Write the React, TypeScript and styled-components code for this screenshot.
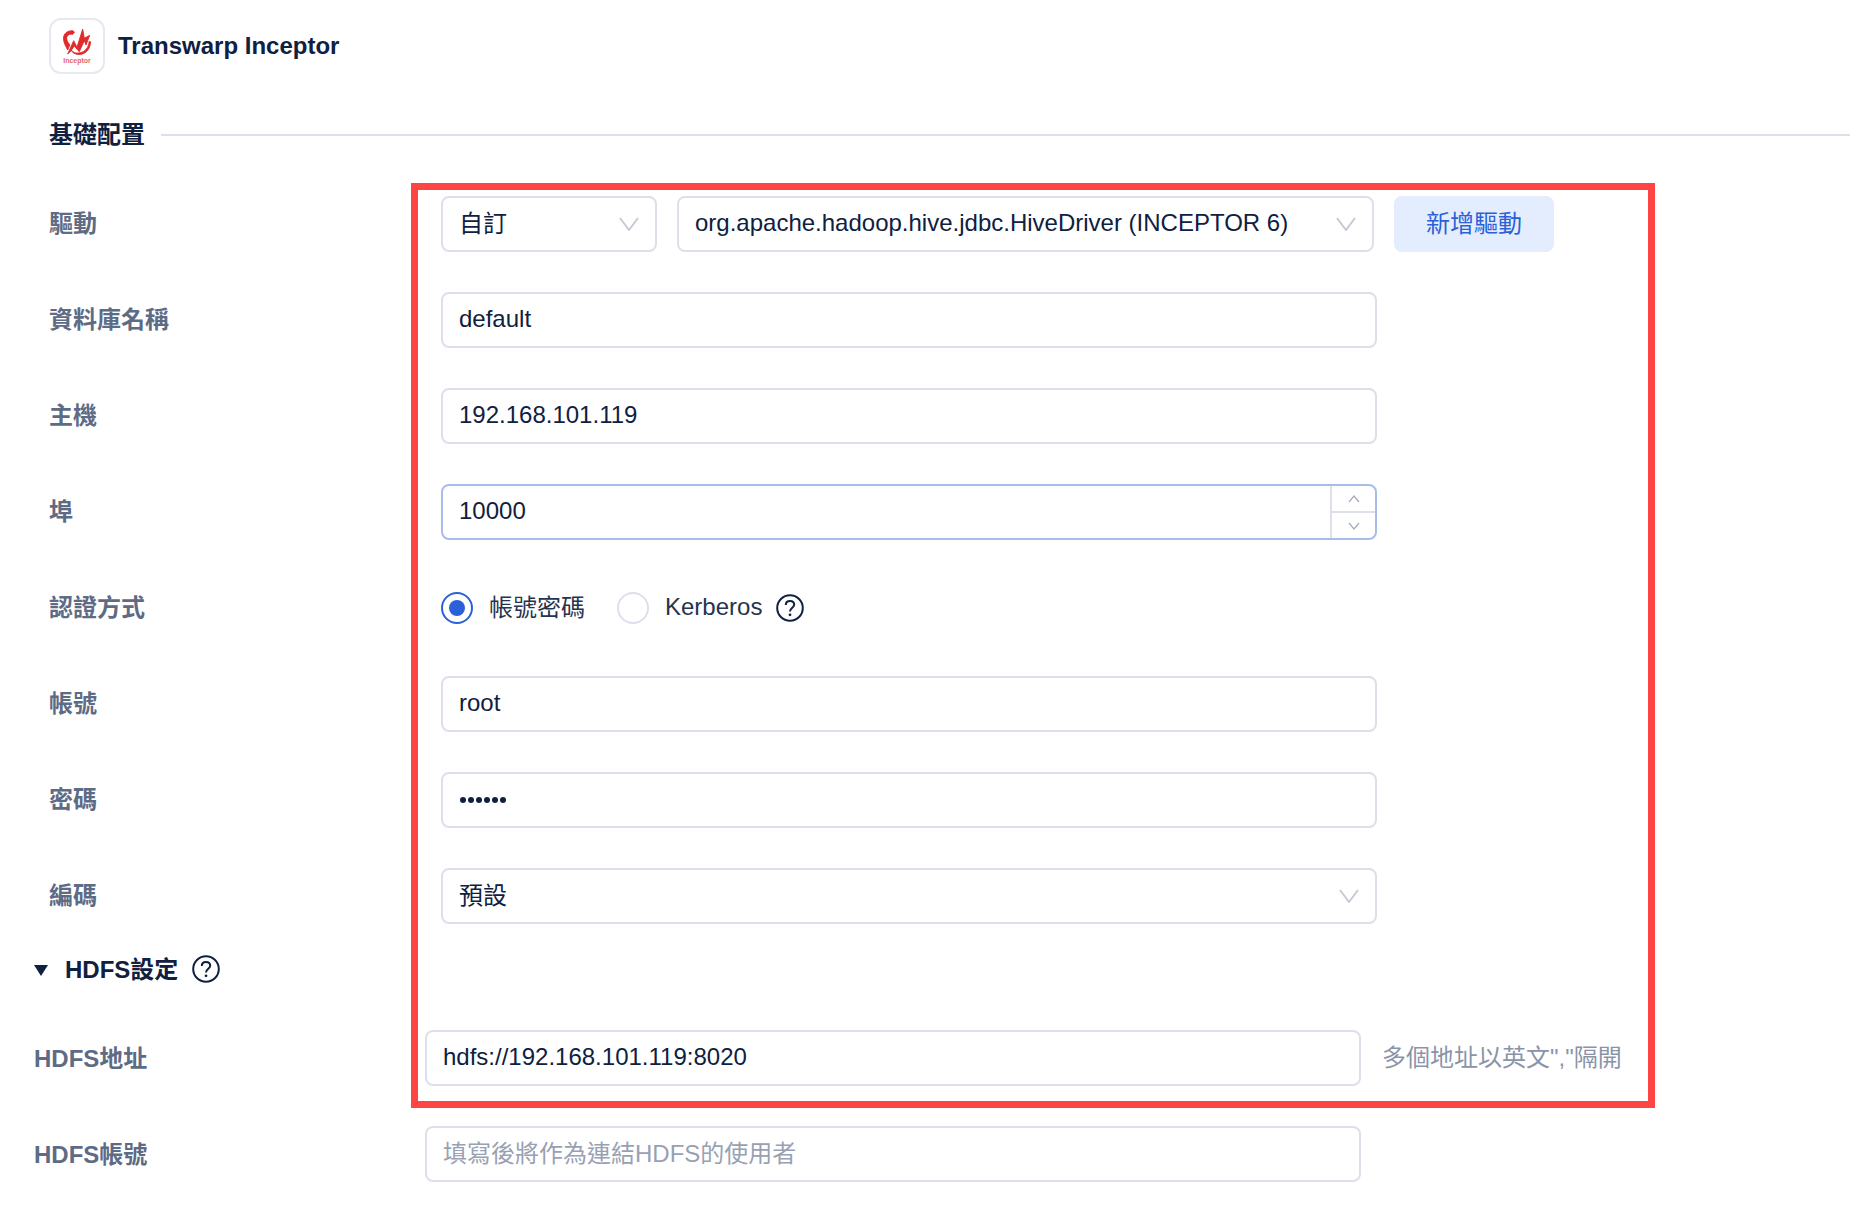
import React from 'react';
import styled, {createGlobalStyle} from 'styled-components';

const GlobalStyle = createGlobalStyle`
  html, body {
    margin: 0;
    padding: 0;
    background: #fff;
  }
  body {
    font-family: "Liberation Sans", "Noto Sans CJK TC", sans-serif;
    color: #0f2040;
  }
`;

const Chevron = () => (
    <ChevronSvg width="20" height="14" viewBox="0 0 20 14">
        <path d="M1 1 L10 13 L19 1" fill="none" stroke="#c5cad5" strokeWidth="2"/>
    </ChevronSvg>
);

const HelpIcon = () => (
    <svg width="28" height="28" viewBox="0 0 28 28">
        <circle cx="14" cy="14" r="12.8" fill="none" stroke="#0f2040" strokeWidth="2"/>
        <path d="M9.8 11 C9.8 8.4 11.8 7 14 7 C16.4 7 18.2 8.5 18.2 10.8 C18.2 13.6 14 14 14 17.4" fill="none" stroke="#0f2040" strokeWidth="2"/>
        <circle cx="14" cy="20.8" r="1.4" fill="#0f2040"/>
    </svg>
);

const App = () => {
    return (
        <Root>
            <GlobalStyle/>
            <Header>
                <LogoBox>
                    <svg width="28" height="27" viewBox="0 0 28 27">
                        <g fill="#e02a2c" stroke="#e02a2c" strokeWidth="0.9" strokeLinejoin="round">
                            <path d="M4.7 26 L10.7 12.7 L14 19.3 L19.7 1 L21.3 10.3 L26.7 7.3 L23 17 L21.3 12.7 L16.3 23.7 L11.3 18 L7.3 23.7 Z"/>
                            <path d="M9.7 2.7 C4 2.5 0.5 6 0.5 10.3 C0.5 15 3 18.5 4.7 22 L6.8 17 C5 14.5 3.7 12.5 3.7 10.3 C3.7 7.5 6.5 5.5 9.5 6.5 L11.5 4 Z"/>
                            <path d="M8 22 C11 25.2 14 25.4 17 24.8 C22 24 26 19 26 13.7 L27.5 13.7 C27.5 21 22.5 26.5 16.3 26.5 C12.5 26.5 9.5 25 8 22 Z"/>
                        </g>
                    </svg>
                    <LogoText>Inceptor</LogoText>
                </LogoBox>
                <Title>Transwarp Inceptor</Title>
            </Header>

            <Section>
                <SectionTitle>基礎配置</SectionTitle>
                <Divider/>
            </Section>

            <FormRow>
                <Label>驅動</Label>
                <Controls>
                    <Select width="216px">
                        <CjkValue>自訂</CjkValue>
                        <Chevron/>
                    </Select>
                    <Select width="697px">
                        <Value>org.apache.hadoop.hive.jdbc.HiveDriver (INCEPTOR 6)</Value>
                        <Chevron/>
                    </Select>
                    <AddButton>新增驅動</AddButton>
                </Controls>
            </FormRow>

            <FormRow>
                <Label>資料庫名稱</Label>
                <Field><Value>default</Value></Field>
            </FormRow>

            <FormRow>
                <Label>主機</Label>
                <Field><Value>192.168.101.119</Value></Field>
            </FormRow>

            <FormRow>
                <Label>埠</Label>
                <Field focused>
                    <Value>10000</Value>
                    <Stepper>
                        <StepButton>
                            <svg width="12" height="8" viewBox="0 0 12 8"><path d="M1 7 L6 1 L11 7" fill="none" stroke="#a5abb8" strokeWidth="1.2"/></svg>
                        </StepButton>
                        <StepButton bottom>
                            <svg width="12" height="8" viewBox="0 0 12 8"><path d="M1 1 L6 7 L11 1" fill="none" stroke="#a5abb8" strokeWidth="1.2"/></svg>
                        </StepButton>
                    </Stepper>
                </Field>
            </FormRow>

            <FormRow>
                <Label>認證方式</Label>
                <RadioGroup>
                    <Radio checked/>
                    <RadioText cjk>帳號密碼</RadioText>
                    <Radio second/>
                    <RadioText>Kerberos</RadioText>
                    <HelpIcon/>
                </RadioGroup>
            </FormRow>

            <FormRow>
                <Label>帳號</Label>
                <Field><Value>root</Value></Field>
            </FormRow>

            <FormRow>
                <Label>密碼</Label>
                <Field>
                    <Dots>
                        {Array.from({length: 6}).map((_, i) => <Dot key={i}/>)}
                    </Dots>
                </Field>
            </FormRow>

            <FormRow last>
                <Label>編碼</Label>
                <Field>
                    <CjkValue>預設</CjkValue>
                    <Chevron/>
                </Field>
            </FormRow>

            <Collapse>
                <Triangle/>
                <CollapseTitle>HDFS設定</CollapseTitle>
                <HelpIcon/>
            </Collapse>

            <HdfsRow>
                <Label>HDFS地址</Label>
                <HdfsField><Value>hdfs://192.168.101.119:8020</Value></HdfsField>
                <Hint>多個地址以英文","隔開</Hint>
            </HdfsRow>

            <HdfsRow>
                <Label>HDFS帳號</Label>
                <HdfsField><Placeholder>填寫後將作為連結HDFS的使用者</Placeholder></HdfsField>
            </HdfsRow>

            <Highlight/>
        </Root>
    );
};

export default App;

const Root = styled.div`
  position: relative;
  width: 1850px;
  height: 1218px;
  overflow: hidden;
  box-sizing: border-box;
  padding-top: 18px;
`;

const Header = styled.div`
  display: flex;
  align-items: center;
  gap: 13px;
  margin-left: 49px;
`;

const LogoBox = styled.div`
  box-sizing: border-box;
  width: 56px;
  height: 56px;
  border: 2px solid #e6e9f0;
  border-radius: 12px;
  display: flex;
  flex-direction: column;
  align-items: center;
  padding-top: 8px;
`;

const LogoText = styled.span`
  font-size: 7px;
  font-weight: 700;
  line-height: 7px;
  color: #e2686a;
  margin-top: 2px;
`;

const Title = styled.div`
  font-size: 24px;
  font-weight: 700;
  color: #0f2040;
`;

const Section = styled.div`
  display: flex;
  align-items: center;
  gap: 16px;
  height: 40px;
  margin: 41px 0 41px 49px;
`;

const SectionTitle = styled.div`
  font-size: 24px;
  font-weight: 700;
  color: #0f2040;
  padding-bottom: 6px;
`;

const Divider = styled.div`
  flex: 1;
  height: 2px;
  background: #dde0ea;
`;

const FormRow = styled.div<{last?: boolean}>`
  display: grid;
  grid-template-columns: 392px 1fr;
  align-items: center;
  height: 56px;
  margin-left: 49px;
  margin-bottom: ${props => props.last ? '25px' : '40px'};
`;

const Label = styled.div`
  font-size: 24px;
  font-weight: 700;
  color: #5d6b85;
  padding-bottom: 5px;
`;

const Controls = styled.div`
  display: flex;
  gap: 20px;
`;

const Select = styled.div<{width: string}>`
  box-sizing: border-box;
  width: ${props => props.width};
  height: 56px;
  border: 2px solid #dde0ea;
  border-radius: 8px;
  padding: 0 16px;
  display: flex;
  align-items: center;
  justify-content: space-between;
`;

const ChevronSvg = styled.svg`
  flex: none;
`;

const Value = styled.span`
  font-size: 24px;
  color: #0f2040;
  padding-bottom: 2px;
`;

const CjkValue = styled(Value)`
  padding-bottom: 6px;
`;

const AddButton = styled.div`
  width: 160px;
  height: 56px;
  box-sizing: border-box;
  padding-bottom: 6px;
  border-radius: 8px;
  background: #e4edfd;
  color: #2b60d8;
  font-size: 24px;
  display: flex;
  align-items: center;
  justify-content: center;
`;

const Field = styled.div<{focused?: boolean}>`
  position: relative;
  box-sizing: border-box;
  width: 936px;
  height: 56px;
  border: 2px solid ${props => props.focused ? '#a9bde8' : '#dde0ea'};
  border-radius: 8px;
  padding: 0 16px;
  display: flex;
  align-items: center;
  justify-content: space-between;
`;

const Stepper = styled.div`
  align-self: stretch;
  width: 43px;
  margin-right: -16px;
  border-left: 2px solid #dde0ea;
  display: flex;
  flex-direction: column;
`;

const StepButton = styled.div<{bottom?: boolean}>`
  flex: 1;
  display: flex;
  align-items: center;
  justify-content: center;
  border-top: ${props => props.bottom ? '2px solid #dde0ea' : 'none'};
`;

const RadioGroup = styled.div`
  display: flex;
  align-items: center;
  padding-bottom: 1px;
`;

const Radio = styled.div<{checked?: boolean; second?: boolean}>`
  box-sizing: border-box;
  width: 32px;
  height: 32px;
  border-radius: 50%;
  border: 2px solid ${props => props.checked ? '#2b60d8' : '#dde0ea'};
  margin-left: ${props => props.second ? '32px' : '0'};
  display: flex;
  align-items: center;
  justify-content: center;

  &::after {
    content: "";
    display: ${props => props.checked ? 'block' : 'none'};
    width: 16px;
    height: 16px;
    border-radius: 50%;
    background: #2b60d8;
  }
`;

const RadioText = styled.span<{cjk?: boolean}>`
  font-size: 24px;
  color: #26344f;
  margin-left: 16px;
  padding-bottom: ${props => props.cjk ? '4px' : '1px'};

  & + svg {
    margin-left: 14px;
  }
`;

const Dots = styled.div`
  display: flex;
  gap: 1.6px;
  margin-left: 1px;
`;

const Dot = styled.span`
  width: 6.4px;
  height: 6.4px;
  border-radius: 50%;
  background: #0f2040;
`;

const Collapse = styled.div`
  display: flex;
  align-items: center;
  height: 40px;
  margin-left: 34px;
  margin-bottom: 41px;
`;

const Triangle = styled.span`
  width: 0;
  height: 0;
  border-left: 7px solid transparent;
  border-right: 7px solid transparent;
  border-top: 11px solid #0f2040;
  margin: 2px 17px 0 0;
`;

const CollapseTitle = styled.span`
  font-size: 24px;
  font-weight: 700;
  color: #0f2040;
  margin-right: 14px;
  padding-bottom: 3px;
`;

const HdfsRow = styled.div`
  display: flex;
  align-items: center;
  height: 56px;
  margin-left: 34px;
  margin-bottom: 40px;

  & > ${Label} {
    width: 391px;
    padding-bottom: 4px;
  }
`;

const HdfsField = styled.div`
  box-sizing: border-box;
  width: 936px;
  height: 56px;
  border: 2px solid #dde0ea;
  border-radius: 8px;
  padding: 0 16px;
  display: flex;
  align-items: center;
`;

const Placeholder = styled.span`
  font-size: 24px;
  color: #98a1b2;
  padding-bottom: 5px;
`;

const Hint = styled.span`
  font-size: 24px;
  color: #8a94a8;
  margin-left: 21px;
  padding-bottom: 6px;
`;

const Highlight = styled.div`
  position: absolute;
  left: 411px;
  top: 183px;
  width: 1244px;
  height: 925px;
  box-sizing: border-box;
  border: 7px solid #ff4444;
  pointer-events: none;
`;
